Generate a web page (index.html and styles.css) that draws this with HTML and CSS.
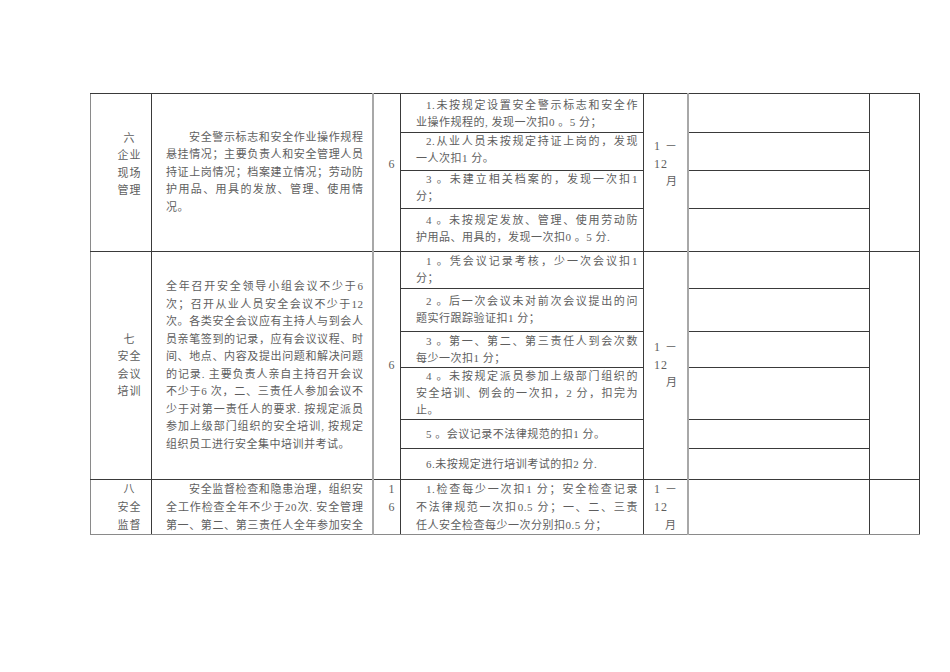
FILE: index.html
```html
<!DOCTYPE html>
<html lang="zh-CN">
<head>
<meta charset="utf-8">
<title>安全考核表</title>
<link rel="stylesheet" href="styles.css">
</head>
<body>
<div class="page">
<table class="grid">
<colgroup>
<col class="c1"><col class="c2"><col class="c3"><col class="c4"><col class="c5"><col class="c6"><col class="c7">
</colgroup>
<tbody>
<tr class="h39">
  <td rowspan="4" class="k up">六<br>企业<br>现场<br>管理</td>
  <td rowspan="4" class="desc">
    <span class="ln j ind2">安全警示标志和安全作业操作规程</span>
    <span class="ln j">悬挂情况；主要负责人和安全管理人员</span>
    <span class="ln j">持证上岗情况；档案建立情况；劳动防</span>
    <span class="ln j">护用品、用具的发放、管理、使用情</span>
    <span class="ln">况。</span>
  </td>
  <td rowspan="4" class="sc up">6</td>
  <td class="rule top p3">
    <span class="ln j ind">1.未按规定设置安全警示标志和安全作</span>
    <span class="ln">业操作规程的, 发现一次扣0 。5 分；</span>
  </td>
  <td rowspan="4" class="per up"><span class="ln">1 －</span><span class="ln">12</span><span class="ln m">月</span></td>
  <td class="blank"></td>
  <td rowspan="4" class="last"></td>
</tr>
<tr class="h38">
  <td class="rule top p0">
    <span class="ln j ind">2.从业人员未按规定持证上岗的，发现</span>
    <span class="ln">一人次扣1 分。</span>
  </td>
  <td class="blank"></td>
</tr>
<tr class="h38">
  <td class="rule top p0">
    <span class="ln j ind">3 。未建立相关档案的，发现一次扣1</span>
    <span class="ln">分；</span>
  </td>
  <td class="blank"></td>
</tr>
<tr class="h43">
  <td class="rule top p2">
    <span class="ln j ind">4 。未按规定发放、管理、使用劳动防</span>
    <span class="ln">护用品、用具的，发现一次扣0 。5 分.</span>
  </td>
  <td class="blank"></td>
</tr>

<tr class="h37">
  <td rowspan="6" class="k">七<br>安全<br>会议<br>培训</td>
  <td rowspan="6" class="desc">
    <span class="ln j">全年召开安全领导小组会议不少于6</span>
    <span class="ln j">次；召开从业人员安全会议不少于12</span>
    <span class="ln j">次。各类安全会议应有主持人与到会人</span>
    <span class="ln j">员亲笔签到的记录，应有会议议程、时</span>
    <span class="ln j">间、地点、内容及提出问题和解决问题</span>
    <span class="ln j">的记录. 主要负责人亲自主持召开会议</span>
    <span class="ln j">不少于6 次，二、三责任人参加会议不</span>
    <span class="ln j">少于对第一责任人的要求. 按规定派员</span>
    <span class="ln j">参加上级部门组织的安全培训, 按规定</span>
    <span class="ln">组织员工进行安全集中培训并考试。</span>
  </td>
  <td rowspan="6" class="sc">6</td>
  <td class="rule">
    <span class="ln j ind">1 。凭会议记录考核，少一次会议扣1</span>
    <span class="ln">分；</span>
  </td>
  <td rowspan="6" class="per"><span class="ln">1 －</span><span class="ln">12</span><span class="ln m">月</span></td>
  <td class="blank"></td>
  <td rowspan="6" class="last"></td>
</tr>
<tr class="h43">
  <td class="rule">
    <span class="ln j ind">2 。后一次会议未对前次会议提出的问</span>
    <span class="ln">题实行跟踪验证扣1 分；</span>
  </td>
  <td class="blank"></td>
</tr>
<tr class="h36">
  <td class="rule">
    <span class="ln j ind">3 。第一、第二、第三责任人到会次数</span>
    <span class="ln">每少一次扣1 分；</span>
  </td>
  <td class="blank"></td>
</tr>
<tr class="h52">
  <td class="rule">
    <span class="ln j ind">4 。未按规定派员参加上级部门组织的</span>
    <span class="ln j">安全培训、例会的一次扣，2 分，扣完为</span>
    <span class="ln">止。</span>
  </td>
  <td class="blank"></td>
</tr>
<tr class="h29">
  <td class="rule">
    <span class="ln ind">5 。会议记录不法律规范的扣1 分。</span>
  </td>
  <td class="blank"></td>
</tr>
<tr class="h31">
  <td class="rule">
    <span class="ln ind">6.未按规定进行培训考试的扣2 分.</span>
  </td>
  <td class="blank"></td>
</tr>

<tr class="h54 cut">
  <td class="k top">八<br>安全<br>监督</td>
  <td class="desc top">
    <span class="ln j ind2">安全监督检查和隐患治理，组织安</span>
    <span class="ln j">全工作检查全年不少于20次. 安全管理</span>
    <span class="ln j">第一、第二、第三责任人全年参加安全</span>
  </td>
  <td class="sc top">1<br>6</td>
  <td class="rule top">
    <span class="ln j ind">1.检查每少一次扣1 分；安全检查记录</span>
    <span class="ln j">不法律规范一次扣0.5 分；一、二、三责</span>
    <span class="ln">任人安全检查每少一次分别扣0.5 分；</span>
  </td>
  <td class="per top"><span class="ln">1 －</span><span class="ln">12</span><span class="ln m8">月</span></td>
  <td class="blank"></td>
  <td class="last"></td>
</tr>
</tbody>
</table>
</div>
</body>
</html>
```
FILE: styles.css
```css
html, body {
  margin: 0;
  padding: 0;
  background: #ffffff;
}
.page {
  padding: 93px 0 0 90px;
}
.grid {
  border-collapse: collapse;
  table-layout: fixed;
  width: 829px;
  font-family: "Liberation Serif", "Noto Sans CJK SC", serif;
  font-size: 11px;
  letter-spacing: 0.5px;
  color: #5e5e5e;
  border-top: 1px solid #8a8a8a;
  border-left: 1px solid #8a8a8a;
  border-bottom: 1px solid #8a8a8a;
}
.c1 { width: 61px; }
.c2 { width: 221px; }
.c3 { width: 28px; }
.c4 { width: 243px; }
.c5 { width: 44px; }
.c6 { width: 182px; }
.c7 { width: 50px; }

.grid td {
  border: 1px solid #3a3a3a;
  padding: 0;
  vertical-align: middle;
  line-height: 17.5px;
  overflow: hidden;
}
.h29 { height: 29px; }
.h31 { height: 31px; }
.h36 { height: 36px; }
.h37 { height: 37px; }
.h38 { height: 38px; }
.h39 { height: 39px; }
.h43 { height: 43px; }
.h52 { height: 52px; }
.h54 { height: 54px; }

.ln { display: block; }
.j { text-align: justify; text-align-last: justify; }

.k {
  text-align: center;
  padding-left: 17px !important;
  border-left-color: #8a8a8a !important;
  letter-spacing: 1px;
}
.desc {
  padding: 0 8px 0 14px !important;
}
.ind2 { text-indent: 23px; }

.sc {
  text-align: right;
  padding-right: 5px !important;
  border-left: 2px solid #a8a8a8 !important;
  font-size: 12px;
}
.rule {
  padding: 0 5px 0 15px !important;
  line-height: 17px !important;
}
.ind { text-indent: 10px; }
.p0 { padding-top: 0 !important; }
.p2 { padding-top: 3px !important; }
.p3 { padding-top: 3px !important; }

.per {
  padding-left: 10px !important;
  letter-spacing: 1px;
  font-size: 12px;
}
.m { padding-left: 12px; font-size: 11px; }
.m8 { padding-left: 11px; font-size: 11px; }

.blank {
  border-left: 2px solid #a8a8a8 !important;
}
.last {
  border-right: 1px solid #3a3a3a;
}
.up { padding-bottom: 16px !important; }
.top { vertical-align: top !important; }
.cut td { line-height: 18px; }
.cut .rule { line-height: 18px !important; }
.cut td, .cut { border-bottom-color: #8a8a8a !important; }
```
